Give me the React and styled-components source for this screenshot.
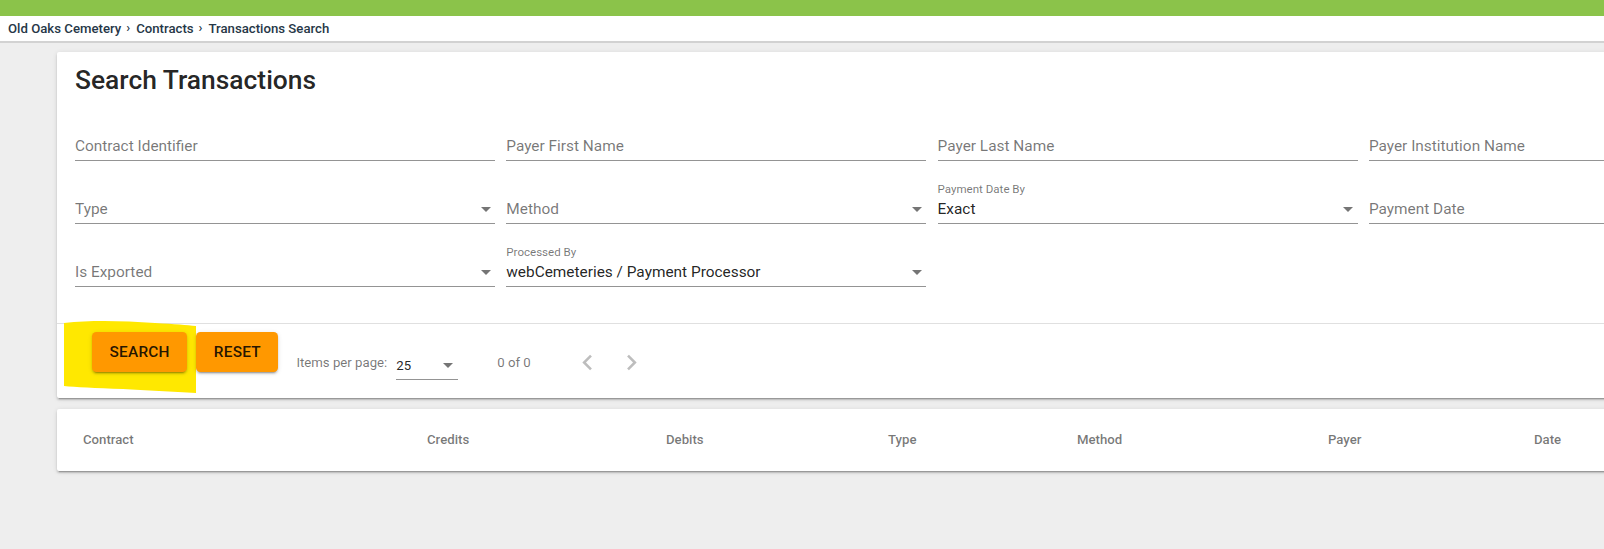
import React from 'react'
import styled, { createGlobalStyle } from 'styled-components'

const GlobalStyle = createGlobalStyle`
  html, body {
    margin: 0;
    padding: 0;
    background: #eeeeee;
    overflow: hidden;
    font-family: Roboto, "Noto Sans", Arial, sans-serif;
  }
`

const Page = styled.div`
  min-height: 100vh;
  width: 100vw;
  background: #eeeeee;
`

const TopBar = styled.div`
  height: 16px;
  background: #8bc34a;
`

const Crumbs = styled.nav`
  height: 25px;
  line-height: 26px;
  padding-left: 8px;
  background: #fff;
  border-bottom: 2px solid #d2d2d2;
  font-size: 13.2px;
  font-weight: 500;
  color: #263747;
  white-space: nowrap;
  display: flex;
  align-items: center;
`

const Sep = styled.span`
  font-size: 13px;
  margin: 0 6px 0 5px;
  position: relative;
  top: -1px;
`

const Main = styled.main`
  padding: 9px 0 0 57px;
  display: flex;
  flex-direction: column;
  gap: 11px;
`

const Card = styled.section`
  width: 1800px;
  background: #fff;
  border-radius: 2px;
  box-shadow: 0 3px 1px -2px rgba(0, 0, 0, 0.2), 0 2px 2px 0 rgba(0, 0, 0, 0.14),
    0 1px 5px 0 rgba(0, 0, 0, 0.12);
`

const Title = styled.h1`
  margin: 0;
  padding: 15px 18px 0;
  font-size: 26.4px;
  line-height: 26px;
  font-weight: 500;
  color: rgba(0, 0, 0, 0.87);
`

const Form = styled.div`
  display: grid;
  grid-template-columns: repeat(4, 420px);
  column-gap: 11.3px;
  padding: 23px 18px 18px;
`

const Field = styled.div`
  padding-bottom: 18.3px;
  font-size: 15.4px;
`

const LabelSlot = styled.div`
  height: 21.7px;
  font-size: 11.55px;
  line-height: 13px;
  color: rgba(0, 0, 0, 0.54);
  padding-top: 4px;
  box-sizing: border-box;
`

const ValueRow = styled.div`
  display: flex;
  align-items: center;
  height: 17.3px;
  line-height: 17.3px;
  padding-bottom: 4.7px;
  border-bottom: 1px solid rgba(0, 0, 0, 0.42);
  color: ${(p) => (p.$placeholder ? 'rgba(0, 0, 0, 0.54)' : 'rgba(0, 0, 0, 0.87)')};
`

const ValueText = styled.span`
  flex: 1;
  white-space: nowrap;
`

const Arrow = styled.span`
  width: 0;
  height: 0;
  border-left: 5.5px solid transparent;
  border-right: 5.5px solid transparent;
  border-top: 5.5px solid rgba(0, 0, 0, 0.54);
  margin: ${(p) => p.$margin || '0 4.4px'};
`

const Divider = styled.div`
  height: 1px;
  background: #e0e0e0;
`

const Actions = styled.div`
  position: relative;
  display: flex;
  align-items: flex-start;
  padding: 8px 0 4px 35px;
`

const Highlight = styled.svg`
  position: absolute;
  left: 6px;
  top: -4px;
  z-index: 0;
`

const Button = styled.button`
  position: relative;
  z-index: 1;
  height: 40px;
  padding: 0 17.6px;
  margin-right: 9px;
  border: none;
  border-radius: 4.4px;
  background: #ff9800;
  color: rgba(0, 0, 0, 0.87);
  font-family: inherit;
  font-size: 15.4px;
  font-weight: 500;
  letter-spacing: 0.2px;
  box-shadow: 0 3px 1px -2px rgba(0, 0, 0, 0.2), 0 2px 2px 0 rgba(0, 0, 0, 0.14),
    0 1px 5px 0 rgba(0, 0, 0, 0.12);
`

const Paginator = styled.div`
  height: 62px;
  display: flex;
  align-items: center;
  margin-left: 9px;
  font-size: 13.2px;
  color: rgba(0, 0, 0, 0.54);
`

const PageSize = styled.div`
  width: 62px;
  margin-left: 9px;
  margin-top: 10px;
  display: flex;
  align-items: center;
  height: 20px;
  padding-bottom: 4px;
  border-bottom: 1px solid rgba(0, 0, 0, 0.42);
  color: rgba(0, 0, 0, 0.87);
`

const RangeLabel = styled.span`
  margin: 0 35px 0 39px;
`

const NavButton = styled.span`
  width: 44px;
  height: 44px;
  display: flex;
  align-items: center;
  justify-content: center;
  color: rgba(0, 0, 0, 0.26);
`

const HeaderRow = styled.div`
  height: 61.6px;
  display: grid;
  grid-template-columns: 344px 239px 222px 189px 251px 206px 1fr;
  align-items: center;
  padding-left: 26px;
`

const HeaderCell = styled.span`
  font-size: 13.2px;
  font-weight: 500;
  color: rgba(0, 0, 0, 0.54);
`

const fields = [
  { placeholder: 'Contract Identifier' },
  { placeholder: 'Payer First Name' },
  { placeholder: 'Payer Last Name' },
  { placeholder: 'Payer Institution Name' },
  { placeholder: 'Type', select: true },
  { placeholder: 'Method', select: true },
  { label: 'Payment Date By', value: 'Exact', select: true },
  { placeholder: 'Payment Date' },
  { placeholder: 'Is Exported', select: true },
  { label: 'Processed By', value: 'webCemeteries / Payment Processor', select: true },
]

const columns = ['Contract', 'Credits', 'Debits', 'Type', 'Method', 'Payer', 'Date']

const Chevron = ({ dir }) => (
  <svg width="31" height="31" viewBox="0 0 24 24" fill="currentColor">
    {dir === 'left' ? (
      <path d="M15.41 7.41L14 6l-6 6 6 6 1.41-1.41L10.83 12z" />
    ) : (
      <path d="M10 6L8.59 7.41 13.17 12l-4.58 4.59L10 18l6-6z" />
    )}
  </svg>
)

const App = () => {
  return (
    <Page>
      <GlobalStyle />
      <TopBar />
      <Crumbs>
        Old Oaks Cemetery<Sep>›</Sep>Contracts<Sep>›</Sep>Transactions Search
      </Crumbs>
      <Main>
        <Card>
          <Title>Search Transactions</Title>
          <Form>
            {fields.map((f, i) => (
              <Field key={i}>
                <LabelSlot>{f.label}</LabelSlot>
                <ValueRow $placeholder={!f.value}>
                  <ValueText>{f.value || f.placeholder}</ValueText>
                  {f.select && <Arrow />}
                </ValueRow>
              </Field>
            ))}
          </Form>
          <Divider />
          <Actions>
            <Highlight width="134" height="74" viewBox="0 0 134 74">
              <path
                d="M1 3 C30 0 60 1 92 3 C112 4 124 5 133 6 L133 73 C110 72 82 70 60 69 C32 68 12 67 1 66 Z"
                fill="#ffe800"
              />
            </Highlight>
            <Button>SEARCH</Button>
            <Button>RESET</Button>
            <Paginator>
              <span>Items per page:</span>
              <PageSize>
                <ValueText>25</ValueText>
                <Arrow $margin="0 5.5px 0 0" />
              </PageSize>
              <RangeLabel>0 of 0</RangeLabel>
              <NavButton>
                <Chevron dir="left" />
              </NavButton>
              <NavButton>
                <Chevron dir="right" />
              </NavButton>
            </Paginator>
          </Actions>
        </Card>
        <Card>
          <HeaderRow>
            {columns.map((c) => (
              <HeaderCell key={c}>{c}</HeaderCell>
            ))}
          </HeaderRow>
        </Card>
      </Main>
    </Page>
  )
}

export default App
